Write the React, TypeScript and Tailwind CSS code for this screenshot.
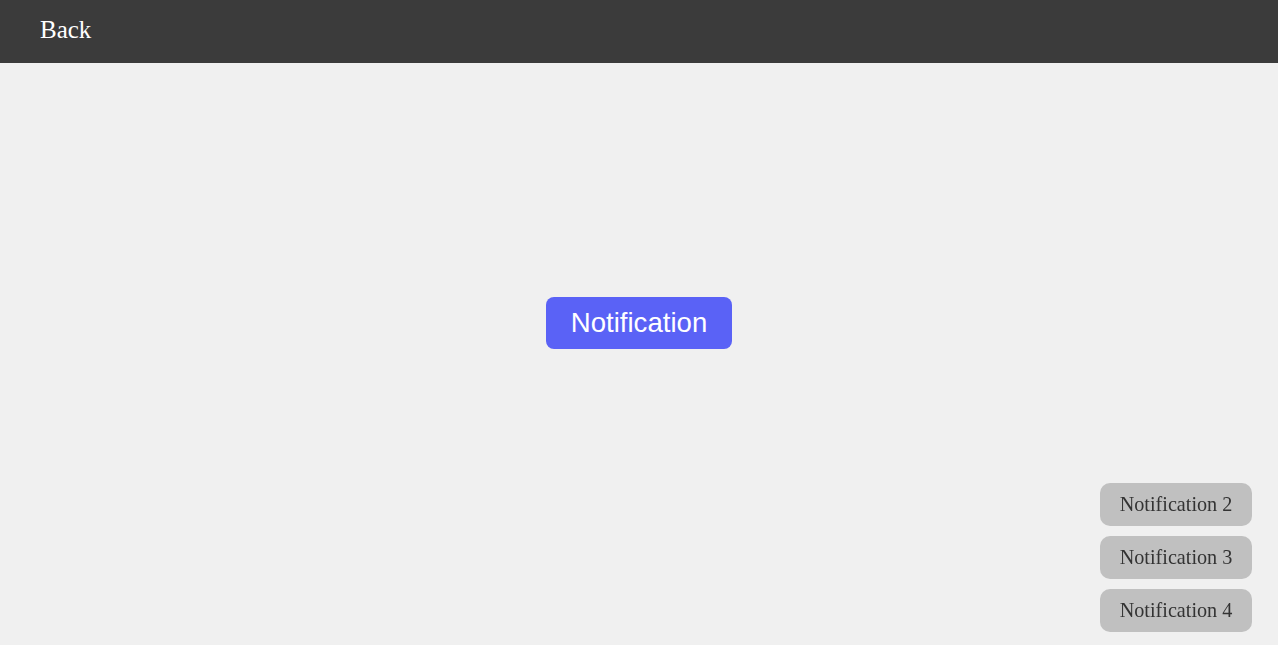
export default function App() {
  const toasts = ['Notification 2', 'Notification 3', 'Notification 4'];

  return (
    <div className="relative h-screen bg-[#f0f0f0] overflow-hidden">
      <header className="h-[63px] bg-[#3b3b3b] flex items-center pl-10 pb-1">
        <button className="text-white text-[25px] font-['Liberation_Serif',serif] leading-none">Back</button>
      </header>

      {/* centered trigger */}
      <div className="fixed inset-0 flex items-center justify-center pointer-events-none">
        <button className="pointer-events-auto bg-[#5a62f6] text-white rounded-lg w-[186px] h-[52px] text-[27.6px] font-['Liberation_Sans',Arial,sans-serif]">
          Notification
        </button>
      </div>

      {/* toast stack */}
      <div className="fixed right-[26px] bottom-[13px] flex flex-col gap-[10px]">
        {toasts.map((t) => (
          <div
            key={t}
            className="w-[152px] h-[43px] flex items-center justify-center bg-[#c0c0c0] text-[#333] rounded-[10px] text-[20.2px] font-['Liberation_Serif',serif]"
          >
            {t}
          </div>
        ))}
      </div>
    </div>
  );
}
